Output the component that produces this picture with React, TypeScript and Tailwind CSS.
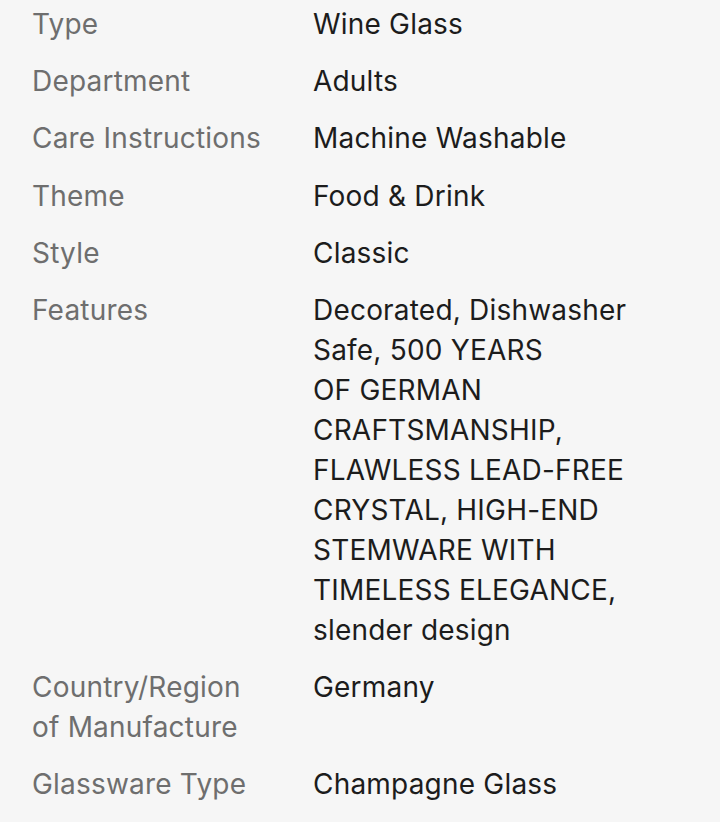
import React from 'react';

interface Spec {
  label: React.ReactNode;
  value: React.ReactNode;
}

const specs: Spec[] = [
  { label: 'Type', value: 'Wine Glass' },
  { label: 'Department', value: 'Adults' },
  { label: 'Care Instructions', value: 'Machine Washable' },
  { label: 'Theme', value: 'Food & Drink' },
  { label: 'Style', value: 'Classic' },
  {
    label: 'Features',
    value: (
      <>
        Decorated, Dishwasher<br />
        Safe, 500 YEARS<br />
        OF GERMAN<br />
        CRAFTSMANSHIP,<br />
        FLAWLESS LEAD-FREE<br />
        CRYSTAL, HIGH-END<br />
        STEMWARE WITH<br />
        TIMELESS ELEGANCE,<br />
        slender design
      </>
    ),
  },
  {
    label: (
      <>
        Country/Region<br />
        of Manufacture
      </>
    ),
    value: 'Germany',
  },
  { label: 'Glassware Type', value: 'Champagne Glass' },
];

const App: React.FC = () => {
  return (
    <div className="min-h-[822px] w-[720px] bg-[#f6f6f6] pt-[4px] pl-[32px] font-['Inter','Liberation_Sans',sans-serif] text-[28px] leading-[40px] tracking-[0.2px]">
      <dl className="flex flex-col gap-[17.2px]">
        {specs.map((s, i) => (
          <div key={i} className="grid grid-cols-[281px_1fr]">
            <dt className="text-[#6e6e6e]">{s.label}</dt>
            <dd className="text-[#1c1c1c]">{s.value}</dd>
          </div>
        ))}
      </dl>
    </div>
  );
};

export default App;
